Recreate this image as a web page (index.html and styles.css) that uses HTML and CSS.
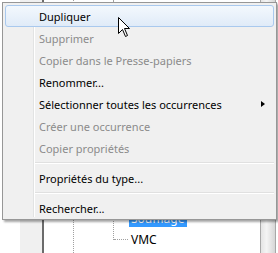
FILE: index.html
```html
<!DOCTYPE html>
<html lang="fr">
<head>
  <meta charset="UTF-8">
  <title>Menu contextuel</title>
  <link rel="stylesheet" href="styles.css">
</head>
<body>

  <div class="screen">
    <!-- arbre en arrière-plan -->
    <div class="panel">
      <div class="blank"></div>
      <div class="band"></div>
      <div class="rule"></div>
      <div class="tree">
        <div class="branch">
          <div class="sub">
            <div class="node"><span class="twig"></span><span class="label selected">Soufflage</span></div>
            <div class="node"><span class="twig"></span><span class="label">VMC</span></div>
          </div>
        </div>
      </div>
      <div class="scrollbar"></div>
    </div>

    <!-- menu contextuel -->
    <div class="menu">
      <div class="item hover">Dupliquer</div>
      <div class="item disabled">Supprimer</div>
      <div class="item disabled">Copier dans le Presse-papiers</div>
      <div class="item">Renommer...</div>
      <div class="item submenu">Sélectionner toutes les occurrences<span class="arrow"></span></div>
      <div class="item disabled">Créer une occurrence</div>
      <div class="item disabled">Copier propriétés</div>
      <div class="sep"></div>
      <div class="item">Propriétés du type...</div>
      <div class="sep"></div>
      <div class="item">Rechercher...</div>
    </div>

    <svg class="cursor" width="13" height="21" viewBox="0 0 13 21">
      <path d="M0.5 0.5 L0.5 16.5 L4.5 12.5 L7.5 19.5 L9.5 18.5 L6.5 11.5 L11.5 11.5 Z" fill="#fff" stroke="#000" stroke-width="1"/>
    </svg>
  </div>

</body>
</html>
```

FILE: styles.css
```css
body {
  margin: 0;
  background: #fff;
  font-family: "Noto Sans", "Open Sans", sans-serif;
  font-size: 11px;
}
.screen {
  position: relative;
  width: 278px;
  height: 253px;
  overflow: hidden;
}

/* arrière-plan */
.panel {
  display: flex;
  height: 253px;
}
.blank {
  width: 20px;
}
.band {
  width: 22px;
  background: #f0f0f0;
}
.rule {
  width: 2px;
  background: #6b6b6b;
}
.tree {
  flex: 1;
}
.branch {
  margin-left: 29px;
  height: 253px;
  border-left: 1px dotted #a0a0a0;
  padding-left: 39px;
}
.sub {
  box-sizing: border-box;
  height: 240px;
  padding-top: 208px;
  border-left: 1px dotted #a0a0a0;
}
.node {
  display: flex;
  align-items: center;
  height: 21px;
  font-size: 12px;
}
.twig {
  width: 14px;
  height: 0;
  margin-right: 1px;
}
.node:last-child .twig {
  border-bottom: 1px dotted #a0a0a0;
}
.label {
  padding: 0 2px;
  line-height: 16px;
  color: #000;
}
.label.selected {
  background: #3399ff;
  color: #fff;
}
.scrollbar {
  width: 14px;
  margin-right: 2px;
  border-left: 1px solid #a8a8a8;
  border-right: 1px solid #a8a8a8;
  background: linear-gradient(to right, #e4e4e4, #f4f4f4 40%, #d6d6d6);
}

/* menu */
.menu {
  position: absolute;
  left: 2px;
  top: 2px;
  width: 269px;
  padding: 2px 2px 0;
  border: 1px solid #979797;
  background: #f0f0f0;
  box-shadow: 2px 2px 2px rgba(0,0,0,0.35);
}
.menu::before {
  content: "";
  position: absolute;
  left: 30px;
  top: 2px;
  bottom: 2px;
  width: 1px;
  background: #e2e3e3;
  border-right: 1px solid #fff;
}
.item {
  position: relative;
  height: 22px;
  line-height: 21px;
  padding-left: 33px;
  color: #000;
  border: 1px solid transparent;
  box-sizing: border-box;
  border-radius: 3px;
}
.item.hover {
  border-color: #a9c9ee;
  background: linear-gradient(#f3f8fd, #e0ebf8);
}
.item.disabled {
  color: #8b8b8b;
}
.arrow {
  position: absolute;
  right: 8px;
  top: 7px;
  width: 0;
  height: 0;
  border-top: 3.5px solid transparent;
  border-bottom: 3.5px solid transparent;
  border-left: 4px solid #000;
}
.sep {
  height: 8px;
  margin-left: 30px;
  position: relative;
}
.sep::after {
  content: "";
  position: absolute;
  left: 0;
  right: 0;
  top: 3px;
  height: 1px;
  background: #e0e0e0;
  border-bottom: 1px solid #fff;
}
.cursor {
  position: absolute;
  left: 118px;
  top: 17px;
}
```
